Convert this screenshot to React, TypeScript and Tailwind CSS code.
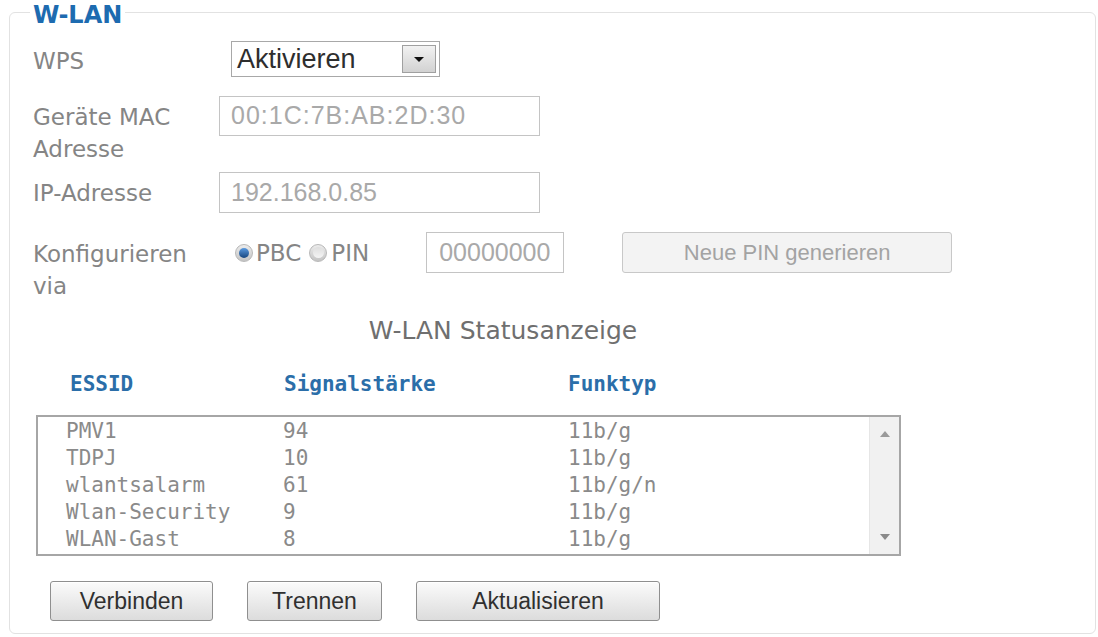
import React from "react";

const label = "text-[23px] leading-[32px] text-[#858585] [font-family:'DejaVu_Sans',sans-serif]";
const arial = "[font-family:'Liberation_Sans',Arial,sans-serif]";
const mono = "[font-family:'DejaVu_Sans_Mono',monospace]";

const networks = [
  { essid: "PMV1", signal: "94", type: "11b/g" },
  { essid: "TDPJ", signal: "10", type: "11b/g" },
  { essid: "wlantsalarm", signal: "61", type: "11b/g/n" },
  { essid: "Wlan-Security", signal: "9", type: "11b/g" },
  { essid: "WLAN-Gast", signal: "8", type: "11b/g" },
];

function Radio({ checked }: { checked?: boolean }) {
  return (
    <span className="flex h-[18px] w-[18px] items-center justify-center rounded-full border border-[#b8b8b8] bg-gradient-to-b from-[#ececec] to-[#c4c4c4]">
      {checked ? (
        <span className="h-[10px] w-[10px] rounded-full bg-gradient-to-b from-[#5a9ae0] to-[#17467f]" />
      ) : (
        <span className="h-[11px] w-[11px] rounded-full bg-gradient-to-b from-[#dedede] to-[#f4f4f4]" />
      )}
    </span>
  );
}

function Button({ children, width }: { children: React.ReactNode; width: string }) {
  return (
    <button
      className={`${width} ${arial} h-[40px] rounded-[3px] border border-[#8f8f8f] bg-gradient-to-b from-[#fbfbfb] to-[#dcdcdc] text-[23px] text-[#303030] shadow-[inset_0_1px_0_#fff]`}
    >
      {children}
    </button>
  );
}

export default function App() {
  return (
    <div className="h-[637px] w-[1098px] bg-white pt-[12px] pl-[9px] pr-[2px]">
      <div className="relative h-[622px] rounded-[6px] border border-[#e2e2e2] pl-[23px]">
        <span className="absolute -top-[11px] left-[20px] bg-white px-[3px] text-[24px] font-bold leading-[26px] text-[#1d6bb0] [font-family:'DejaVu_Sans',sans-serif]">
          W-LAN
        </span>

        <div className="mt-[28px] flex h-[36px] items-center">
          <span className={`${label} w-[198px] pt-[3px]`}>WPS</span>
          <div className={`${arial} flex h-[36px] w-[209px] items-center justify-between border border-[#a8a8a8] pl-[5px] pr-[3px] text-[27px] text-[#2e2e2e]`}>
            <span>Aktivieren</span>
            <span className="flex h-[28px] w-[34px] items-center justify-center border border-[#a0a0a0] bg-gradient-to-b from-[#f2f2f2] to-[#d2d2d2]">
              <svg width="12" height="7" viewBox="0 0 12 7">
                <path d="M1 1h10L6 6z" fill="#111" />
              </svg>
            </span>
          </div>
        </div>

        <div className="mt-[19px] flex items-start">
          <span className={`${label} w-[186px] pt-[5px]`}>
            Geräte MAC
            <br />
            Adresse
          </span>
          <div className={`${arial} flex h-[40px] w-[321px] items-center border border-[#c4c4c4] pl-[11px] text-[25px] tracking-[1px] text-[#a9a9a9]`}>
            00:1C:7B:AB:2D:30
          </div>
        </div>

        <div className="mt-[7px] flex items-center">
          <span className={`${label} w-[186px]`}>IP-Adresse</span>
          <div className={`${arial} flex h-[41px] w-[321px] items-center border border-[#c4c4c4] pl-[11px] text-[25px] text-[#a9a9a9]`}>
            192.168.0.85
          </div>
        </div>

        <div className="mt-[19px] flex items-start">
          <span className={`${label} w-[202px] pt-[6px]`}>
            Konfigurieren
            <br />
            via
          </span>
          <div className="flex h-[41px] items-center">
            <Radio checked />
            <span className={`${label} ml-[3px]`}>PBC</span>
            <span className="ml-[8px]">
              <Radio />
            </span>
            <span className={`${label} ml-[4px]`}>PIN</span>
            <div className={`${arial} ml-[57px] flex h-[41px] w-[138px] items-center border border-[#c4c4c4] pl-[12px] text-[25px] text-[#a9a9a9]`}>
              00000000
            </div>
            <div className={`${arial} ml-[58px] flex h-[41px] w-[330px] items-center justify-center rounded-[3px] border border-[#c8c8c8] bg-[#f3f3f3] text-[22px] text-[#a3a3a3]`}>
              Neue PIN generieren
            </div>
          </div>
        </div>

        <div className="mt-[13px] w-[940px] text-center text-[25px] leading-[32px] text-[#6f6f6f] [font-family:'DejaVu_Sans',sans-serif]">
          W-LAN Statusanzeige
        </div>

        <div className={`${mono} mt-[21px] flex pl-[37px] text-[21px] font-bold leading-[32px] text-[#2b6ea9]`}>
          <span className="w-[214px]">ESSID</span>
          <span className="w-[284px]">Signalstärke</span>
          <span>Funktyp</span>
        </div>

        <div className="mt-[15px] ml-[3px] flex h-[141px] w-[865px] overflow-hidden border-2 border-[#a6a6a6]">
          <div className={`${mono} flex-1 pl-[28px] pt-[1px] text-[21px] leading-[27px] text-[#8a8a8a]`}>
            {networks.map((n) => (
              <div key={n.essid} className="flex">
                <span className="w-[217px]">{n.essid}</span>
                <span className="w-[285px]">{n.signal}</span>
                <span>{n.type}</span>
              </div>
            ))}
          </div>
          <div className="flex w-[30px] flex-col items-center justify-between border-l border-[#e6e6e6] bg-[#f1f1f1] py-[14px]">
            <svg width="10" height="6" viewBox="0 0 10 6">
              <path d="M0 6h10L5 0z" fill="#9a9a9a" />
            </svg>
            <svg width="10" height="6" viewBox="0 0 10 6">
              <path d="M0 0h10L5 6z" fill="#8a8a8a" />
            </svg>
          </div>
        </div>

        <div className="mt-[25px] ml-[17px] flex gap-[34px]">
          <Button width="w-[163px]">Verbinden</Button>
          <Button width="w-[135px]">Trennen</Button>
          <Button width="w-[244px]">Aktualisieren</Button>
        </div>
      </div>
    </div>
  );
}
